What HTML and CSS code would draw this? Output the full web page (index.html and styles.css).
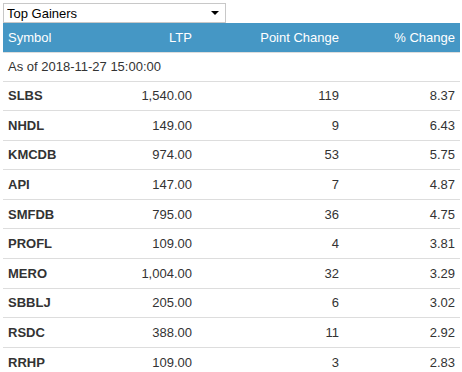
FILE: index.html
```html
<!DOCTYPE html>
<html>
<head>
<meta charset="utf-8">
<link rel="stylesheet" href="styles.css">
</head>
<body>
<div class="picker">
  <select class="picker-select">
    <option>Top Gainers</option>
    <option>Top Losers</option>
  </select>
  <span class="picker-arrow"></span>
</div>
<table class="movers">
  <colgroup>
    <col class="c-sym"><col class="c-ltp"><col class="c-pt"><col class="c-pct">
  </colgroup>
  <thead>
    <tr><th class="left">Symbol</th><th>LTP</th><th>Point Change</th><th>% Change</th></tr>
  </thead>
  <tbody>
    <tr class="asof"><td colspan="4">As of 2018-11-27 15:00:00</td></tr>
    <tr><td class="sym">SLBS</td><td>1,540.00</td><td>119</td><td>8.37</td></tr>
    <tr><td class="sym">NHDL</td><td>149.00</td><td>9</td><td>6.43</td></tr>
    <tr><td class="sym">KMCDB</td><td>974.00</td><td>53</td><td>5.75</td></tr>
    <tr><td class="sym">API</td><td>147.00</td><td>7</td><td>4.87</td></tr>
    <tr><td class="sym">SMFDB</td><td>795.00</td><td>36</td><td>4.75</td></tr>
    <tr><td class="sym">PROFL</td><td>109.00</td><td>4</td><td>3.81</td></tr>
    <tr><td class="sym">MERO</td><td>1,004.00</td><td>32</td><td>3.29</td></tr>
    <tr><td class="sym">SBBLJ</td><td>205.00</td><td>6</td><td>3.02</td></tr>
    <tr><td class="sym">RSDC</td><td>388.00</td><td>11</td><td>2.92</td></tr>
    <tr><td class="sym">RRHP</td><td>109.00</td><td>3</td><td>2.83</td></tr>
  </tbody>
</table>
</body>
</html>
```
FILE: styles.css
```css
html, body {
  margin: 0;
  padding: 0;
  background: #fff;
}
body {
  padding: 3px;
  font-family: "Liberation Sans", Arial, sans-serif;
  font-size: 13px;
  color: #333;
}
.picker {
  position: relative;
  width: 223px;
  height: 20px;
}
.picker-select {
  -webkit-appearance: none;
  appearance: none;
  box-sizing: border-box;
  width: 223px;
  height: 20px;
  margin: 0;
  padding: 0 0 0 3px;
  border: 1px solid #c8c8c8;
  border-radius: 0;
  background: #fff;
  font-family: "Liberation Sans", Arial, sans-serif;
  font-size: 13px;
  color: #000;
  outline: none;
}
.picker-arrow {
  position: absolute;
  right: 7px;
  top: 8px;
  width: 0;
  height: 0;
  border-left: 4px solid transparent;
  border-right: 4px solid transparent;
  border-top: 4px solid #000;
  pointer-events: none;
}
.movers {
  width: 457px;
  border-collapse: collapse;
  table-layout: fixed;
}
.c-sym { width: 97px; }
.c-ltp { width: 97px; }
.c-pt { width: 147px; }
.c-pct { width: 116px; }
.movers th {
  background: #4597c5;
  color: #fff;
  font-weight: normal;
  text-align: right;
  height: 29px;
  padding: 0 5px;
  border-bottom: 1px solid #dddddd;
  box-sizing: border-box;
}
.movers th.left { text-align: left; }
.movers td {
  height: 29.6px;
  padding: 0 5px;
  text-align: right;
  border-bottom: 1px solid #dddddd;
  box-sizing: border-box;
  white-space: nowrap;
}
.movers tr.asof td {
  text-align: left;
  height: 29px;
}
.movers td.sym {
  text-align: left;
  font-weight: bold;
}
```
